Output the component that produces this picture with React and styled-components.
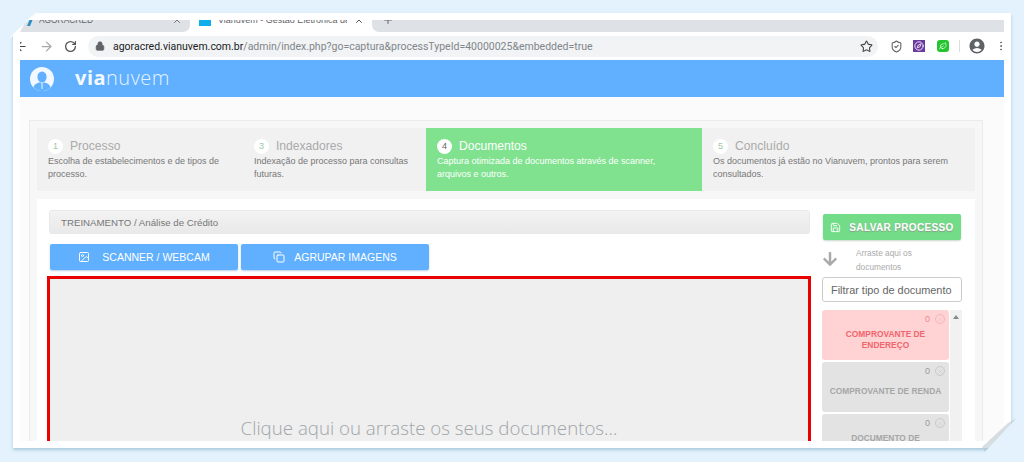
import React from "react";
import styled, { createGlobalStyle } from "styled-components";
import { ArrowLeft, ArrowRight, RotateCw, Lock, Star, ShieldCheck, EllipsisVertical, Compass, Leaf, Save, Image, Copy, X, Plus } from "lucide-react";
import { MdAccountCircle } from "react-icons/md";
import { FaArrowDown } from "react-icons/fa";

const Global = createGlobalStyle`
  html, body { margin: 0; padding: 0; background: #e3f2fc; }
  body { font-family: "Liberation Sans", Arial, sans-serif; }
  #root { width: 1024px; height: 462px; overflow: hidden; }
  * { box-sizing: border-box; }
`;

const Stage = styled.div`
  position: relative;
  width: 1024px;
  height: 462px;
  padding: 13px;
  background: #e3f2fc;
`;

const Frame = styled.div`
  width: 998px;
  height: 435px;
  padding: 7px;
  background: #fff;
  box-shadow: 0 2px 3px #a9c8dc;
`;

const Browser = styled.div`
  height: 100%;
  display: flex;
  flex-direction: column;
  overflow: hidden;
`;

const Fold = styled.svg`
  position: absolute;
  left: 0;
  top: 0;
  pointer-events: none;
`;

/* chrome */
const TabStrip = styled.div`
  flex: none;
  height: 12px;
  display: flex;
  align-items: flex-end;
  background: #fff;
  overflow: hidden;
`;

const Tab = styled.div`
  flex: ${(p) => (p.$fill ? "1" : "none")};
  width: ${(p) => p.$w}px;
  height: 24px;
  display: flex;
  align-items: center;
  gap: ${(p) => p.$gap || 7}px;
  padding: 0 8px 0 ${(p) => p.$pad || 8}px;
  font: ${(p) => p.$size || 9}px "Liberation Sans", sans-serif;
  color: #5f6368;
  white-space: nowrap;
  background: ${(p) => (p.$active ? "#fff" : "#dee1e6")};
  border-bottom-right-radius: ${(p) => (p.$first ? 7 : 0)}px;
  border-bottom-left-radius: ${(p) => (p.$fill ? 7 : 0)}px;
`;

const TabLabel = styled.span`
  flex: 1;
  overflow: hidden;
`;

const Favicon = styled.span`
  flex: none;
  width: 12px;
  height: 12px;
  background: #10aeea;
`;

const Toolbar = styled.div`
  flex: none;
  height: 28px;
  display: flex;
  align-items: center;
  color: #5f6368;
  background: #fff;
`;

const NavIcon = styled.span`
  flex: none;
  width: ${(p) => p.$w || 24}px;
  margin-left: ${(p) => p.$ml || 0}px;
  display: flex;
  justify-content: center;
  color: ${(p) => p.$color || "#5f6368"};
`;

const Omnibox = styled.div`
  flex: none;
  width: 790px;
  height: 21px;
  margin: 0 7px 0 6px;
  padding: 0 5px 0 7px;
  display: flex;
  align-items: center;
  border-radius: 11px;
  background: #f1f3f4;
`;

const Url = styled.div`
  flex: 1;
  margin-left: 8px;
  font: 10.5px Roboto, sans-serif;
  color: #80868b;
  white-space: nowrap;
  b { font-weight: 400; color: #202124; }
`;

const Ext = styled.span`
  flex: none;
  width: 12px;
  height: 12px;
  margin-left: ${(p) => p.$ml || 0}px;
  display: flex;
  align-items: center;
  justify-content: center;
  border-radius: ${(p) => p.$r || 0}px;
  background: ${(p) => p.$bg};
  color: #fff;
`;

const Divider = styled.span`
  flex: none;
  width: 1px;
  height: 12px;
  margin-left: 10px;
  background: #dadce0;
`;

/* app */
const Header = styled.header`
  flex: none;
  height: 37px;
  display: flex;
  align-items: center;
  gap: 21px;
  padding-left: 10px;
  background: #60b0ff;
  box-shadow: 0 1px 2px #d8d4cc;
`;

const Brand = styled.div`
  padding-bottom: 2px;
  font: 300 20px/1 "Open Sans", sans-serif;
  letter-spacing: 0.5px;
  color: #e6f3ff;
  b { font-weight: 700; color: #f4faff; }
`;

const Page = styled.main`
  flex: 1;
  min-height: 0;
  padding: 23px 21px 0 9px;
  background: #fbfbfb;
`;

const Panel = styled.section`
  height: 100%;
  padding: 7px 7px 0;
  background: #f7f7f7;
  border: 1px solid #ebebeb;
  border-bottom: 0;
`;

const Steps = styled.ol`
  margin: 0;
  padding: 0;
  list-style: none;
  display: grid;
  grid-template-columns: 206px 183px 276px 1fr;
  height: 63px;
  background: #f1f1f1;
`;

const Step = styled.li`
  padding: 10px 16px 0 11px;
  background: ${(p) => (p.$active ? "#80e28f" : "transparent")};
  color: ${(p) => (p.$active ? "#fff" : "#777")};
  font-size: 9px;
  line-height: 13px;
`;

const StepHead = styled.div`
  display: flex;
  align-items: center;
  gap: 7px;
  height: 16px;
  margin-bottom: 1px;
  font: 12.1px "Liberation Sans", sans-serif;
  color: ${(p) => (p.$active ? "#fff" : "#aaa")};
`;

const StepNum = styled.span`
  width: 15px;
  height: 15px;
  display: flex;
  align-items: center;
  justify-content: center;
  border-radius: 50%;
  background: #fff;
  color: ${(p) => (p.$active ? "#666" : "#9ac99f")};
  font: 9px "Liberation Sans", sans-serif;
`;

const Card = styled.div`
  height: 100%;
  margin-top: 8px;
  padding: 11px 12px 0 10px;
  display: grid;
  grid-template-columns: 764px 140px;
  column-gap: 11px;
  background: #fff;
`;

const Main = styled.div`
  display: flex;
  flex-direction: column;
`;

const Crumb = styled.div`
  height: 24px;
  margin: 0 1px 0 2px;
  padding-left: 11px;
  display: flex;
  align-items: center;
  border-radius: 3px;
  border: 1px solid #e8e8e8;
  background: linear-gradient(#f3f3f3, #e9e9e9);
  font-size: 9.7px;
  color: #777;
`;

const ButtonRow = styled.div`
  display: flex;
  gap: 3px;
  margin: 10px 0 6px 3px;
`;

const BlueButton = styled.button`
  width: 188px;
  height: 26px;
  display: flex;
  align-items: center;
  justify-content: center;
  gap: ${(p) => p.$gap}px;
  border: 0;
  border-radius: 2px;
  background: #60b0ff;
  box-shadow: 0 1px 2px #b9cfe4;
  color: #fff;
  font: 10.5px "Liberation Sans", sans-serif;
`;

const DropZone = styled.div`
  height: 240px;
  display: flex;
  justify-content: center;
  padding-top: 136px;
  border: 3px solid #e90000;
  background: #efefef;
  font: 300 18.7px "Open Sans", sans-serif;
  color: #a0a5a9;
`;

const Side = styled.aside`
  display: flex;
  flex-direction: column;
`;

const SaveButton = styled.button`
  width: 138px;
  height: 26px;
  margin: 4px 0 0 1px;
  padding: 0;
  display: flex;
  align-items: center;
  justify-content: center;
  gap: 8px;
  border: 0;
  border-radius: 2px;
  background: #73dc88;
  box-shadow: 0 1px 2px #c8d8cc;
  color: #fff;
  font: 700 10px "Liberation Sans", sans-serif;
  letter-spacing: 0.35px;
  white-space: nowrap;
  text-shadow: 0 1px 1px #8a9a8c;
`;

const DragHint = styled.div`
  height: 37px;
  display: flex;
  align-items: center;
  color: #aaa;
`;

const HintText = styled.span`
  margin-left: 18px;
  padding-top: 3px;
  font: 8.3px/14px "Liberation Sans", sans-serif;
  color: #aaa;
`;

const Filter = styled.input`
  width: 140px;
  height: 25px;
  padding: 0 8px;
  border: 1px solid #ccc;
  border-radius: 3px;
  font: 10.9px "Liberation Sans", sans-serif;
  &::placeholder { color: #666; opacity: 1; }
`;

const DocArea = styled.div`
  margin-top: 8px;
  display: grid;
  grid-template-columns: 127px 13px;
  overflow: hidden;
`;

const DocList = styled.div`
  display: flex;
  flex-direction: column;
  gap: 2px;
`;

const DocCard = styled.div`
  position: relative;
  height: 50px;
  padding: 9px 4px 0;
  display: flex;
  align-items: center;
  justify-content: center;
  text-align: center;
  border-radius: 3px;
  background: ${(p) => (p.$alert ? "#ffd3d3" : "#e3e3e3")};
  color: ${(p) => (p.$alert ? "#f2646c" : "#a6a6a6")};
  font: 700 8.4px/11px "Liberation Sans", sans-serif;
`;

const DocCount = styled.span`
  position: absolute;
  top: 4px;
  right: 4px;
  display: flex;
  align-items: center;
  gap: 5px;
  font: 400 9px "Liberation Sans", sans-serif;
  color: ${(p) => (p.$alert ? "#f0888c" : "#999")};
`;

const RemoveDot = styled.span`
  width: 10px;
  height: 10px;
  display: flex;
  align-items: center;
  justify-content: center;
  border: 1px solid ${(p) => (p.$alert ? "#f3b6b6" : "#c9c9c9")};
  border-radius: 50%;
  color: ${(p) => (p.$alert ? "#f3b6b6" : "#c9c9c9")};
`;

const Scrollbar = styled.div`
  margin-left: 1px;
  display: flex;
  justify-content: center;
  padding-top: 5px;
  background: #f1f1f1;
  &::before {
    content: "";
    width: 0;
    height: 0;
    border: 3px solid transparent;
    border-top: 0;
    border-bottom: 4px solid #888;
  }
`;

const steps = [
  { n: 1, title: "Processo", text: "Escolha de estabelecimentos e de tipos de processo." },
  { n: 3, title: "Indexadores", text: "Indexação de processo para consultas futuras." },
  { n: 4, title: "Documentos", text: "Captura otimizada de documentos através de scanner, arquivos e outros.", active: true },
  { n: 5, title: "Concluído", text: "Os documentos já estão no Vianuvem, prontos para serem consultados." },
];

const docs = [
  { name: "COMPROVANTE DE ENDEREÇO", alert: true },
  { name: "COMPROVANTE DE RENDA" },
  { name: "DOCUMENTO DE IDENTIFICAÇÃO" },
];

function Logo() {
  return (
    <svg width="24" height="24" viewBox="0 0 24 24">
      <circle cx="12" cy="12" r="12" fill="#f2f8ff" />
      <ellipse cx="12" cy="10" rx="4.6" ry="5.6" fill="#60b0ff" />
      <path d="M3.5 20c1.5-3.6 5-4.4 6.5-4.8l2 1.8 2-1.8c1.5.4 5 1.2 6.5 4.8-2 2.4-5 4-8.500 4s-6.500-1.600-8.500-4z" fill="#60b0ff" />
      <path d="M12 17v5" stroke="#f2f8ff" strokeWidth="1" />
    </svg>
  );
}

export default function App() {
  return (
    <Stage>
      <Global />
      <Frame>
        <Browser>
          <TabStrip>
            <Tab $first $w={170} $pad={6} $gap={3} $size={8.4}>
              <svg width="10" height="12" viewBox="0 0 10 12"><path d="M1 12 6 0h3L4 12z" fill="#2a8fc4" /></svg>
              <TabLabel>AGORACRED</TabLabel>
              <X size={10} />
            </Tab>
            <Tab $active $w={182} $pad={9}>
              <Favicon />
              <TabLabel>Vianuvem - Gestão Eletrônica de</TabLabel>
              <X size={10} color="#333" />
            </Tab>
            <Tab $fill $pad={10}><Plus size={12} /></Tab>
          </TabStrip>
          <Toolbar>
            <NavIcon $w={14} $ml={-6} $color="#444"><ArrowLeft size={15} /></NavIcon>
            <NavIcon $ml={6} $color="#aaa"><ArrowRight size={15} /></NavIcon>
            <NavIcon $color="#555"><RotateCw size={13} strokeWidth={2.4} /></NavIcon>
            <Omnibox>
              <Lock size={10} fill="#5f6368" />
              <Url><b>agoracred.vianuvem.com.br</b>/admin/index.php?go=captura&amp;processTypeId=40000025&amp;embedded=true</Url>
              <Star size={13} color="#444" />
            </Omnibox>
            <NavIcon $w={22}><ShieldCheck size={13} /></NavIcon>
            <Ext $ml={6} $bg="#6c3a9e"><Compass size={10} /></Ext>
            <Ext $ml={12} $r={3} $bg="#22c52e"><Leaf size={8} /></Ext>
            <Divider />
            <NavIcon $w={24} $ml={5} $color="#5f6368"><MdAccountCircle size={18} /></NavIcon>
            <NavIcon $w={12} $ml={6}><EllipsisVertical size={14} /></NavIcon>
          </Toolbar>
          <Header>
            <Logo />
            <Brand><b>via</b>nuvem</Brand>
          </Header>
          <Page>
            <Panel>
              <Steps>
                {steps.map((s) => (
                  <Step key={s.n} $active={s.active}>
                    <StepHead $active={s.active}>
                      <StepNum $active={s.active}>{s.n}</StepNum>
                      {s.title}
                    </StepHead>
                    {s.text}
                  </Step>
                ))}
              </Steps>
              <Card>
                <Main>
                  <Crumb>TREINAMENTO / Análise de Crédito</Crumb>
                  <ButtonRow>
                    <BlueButton $gap={12}><Image size={12} />SCANNER / WEBCAM</BlueButton>
                    <BlueButton $gap={9}><Copy size={12} />AGRUPAR IMAGENS</BlueButton>
                  </ButtonRow>
                  <DropZone>Clique aqui ou arraste os seus documentos...</DropZone>
                </Main>
                <Side>
                  <SaveButton><Save size={11} />SALVAR PROCESSO</SaveButton>
                  <DragHint>
                    <FaArrowDown size={16} />
                    <HintText>Arraste aqui os<br />documentos</HintText>
                  </DragHint>
                  <Filter placeholder="Filtrar tipo de documento" readOnly />
                  <DocArea>
                    <DocList>
                      {docs.map((d) => (
                        <DocCard key={d.name} $alert={d.alert}>
                          <DocCount $alert={d.alert}>
                            0
                            <RemoveDot $alert={d.alert}><X size={7} /></RemoveDot>
                          </DocCount>
                          {d.name}
                        </DocCard>
                      ))}
                    </DocList>
                    <Scrollbar />
                  </DocArea>
                </Side>
              </Card>
            </Panel>
          </Page>
        </Browser>
      </Frame>
      <Fold width="1024" height="462" viewBox="0 0 1024 462">
        <polygon points="0,0 39,0 39,10 8,39 0,39" fill="#e3f2fc" />
        <polygon points="39,10 8,39 20,32 26,21" fill="#fff" />
        <polygon points="1024,462 985,462 985,452 1017,418 1024,418" fill="#e3f2fc" />
        <polygon points="1017,418 985,452 982,447 1008,423" fill="#b8c4cc" opacity="0.55" />
        <polygon points="1017,418 985,452 985,462 1024,462 1024,418" fill="#e3f2fc" />
      </Fold>
    </Stage>
  );
}
